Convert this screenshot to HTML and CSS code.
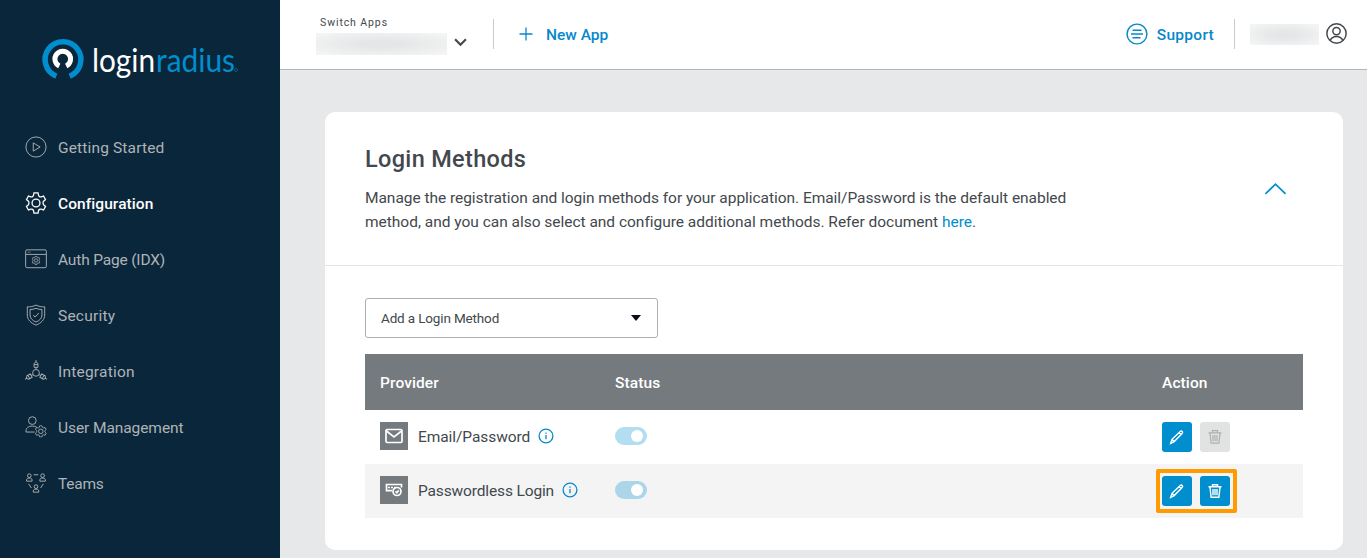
FILE: index.html
```html
<!DOCTYPE html>
<html lang="en">
<head>
<meta charset="utf-8">
<title>LoginRadius - Login Methods</title>
<link rel="stylesheet" href="styles.css">
</head>
<body>
<svg class="defs" width="0" height="0">
  <symbol id="gear" viewBox="0 0 24 24"><path d="M9.300 3.500 9.800 1h4.400l.5 2.500c.3 1.400 1.600 2.200 3 1.700l2.500-.8 2.200 3.800-1.900 1.700c-1.100 1-1.100 3.200 0 4.200l1.900 1.700-2.200 3.800-2.500-.8c-1.400-.5-2.700.3-3 1.700l-.5 2.500H9.800l-.5-2.500c-.3-1.400-1.600-2.200-3-1.700l-2.500.8-2.200-3.800 1.900-1.700c1.100-1 1.100-3.200 0-4.200L1.600 8.200l2.200-3.800 2.500.8c1.400.5 2.700-.3 3-1.700Z"/><circle cx="12" cy="12" r="4.300"/></symbol>
  <symbol id="pencil" viewBox="0 0 16 16"><path d="m1.700 14.300 1.300-4 8.200-7.800c.7-.7 1.400-.7 2 0s.6 1.300-.1 2L5.200 12.600ZM3.200 10.500l1.900 1.900M10.300 3.800l1.800 1.800"/></symbol>
  <symbol id="trash" viewBox="0 0 16 16"><path d="M1.500 3.800h13M5.500 3.600V1.700h5v1.900M3 4.300l1.100 9.900h7.800L13 4.300M6 6v6.200M8 6v6.200M10 6v6.200"/></symbol>
  <symbol id="info" viewBox="0 0 16 16"><circle cx="8" cy="8" r="6.900"/><path d="M8 7v4.200M8 4.500v1.200"/></symbol>
</svg>
<div class="app">
  <aside class="sidebar">
    <svg class="logo" viewBox="0 0 200 44" role="img" aria-label="loginradius">
      <path class="ring ring-outer" d="M15.300 37.200A17.900 17.900 0 1 1 28.700 37.200"/>
      <path class="ring ring-inner" d="M18.300 27A7.800 7.800 0 1 1 25.200 27"/>
      <text class="word login" x="51" y="33" textLength="63" lengthAdjust="spacingAndGlyphs">login</text>
      <text class="word radius" x="115" y="33" textLength="79" lengthAdjust="spacingAndGlyphs">radius</text>
      <circle class="reg" cx="195" cy="31" r="1.500"/>
    </svg>
    <nav class="menu">
      <a class="item started"><svg viewBox="0 0 24 24"><circle cx="12" cy="12" r="11"/><path d="M9 7.500v9l7.500-4.500Z"/></svg><span>Getting Started</span></a>
      <a class="item config active"><svg><use href="#gear"/></svg><span>Configuration</span></a>
      <a class="item auth"><svg viewBox="0 0 24 24"><rect x=".7" y="2" width="22.600" height="19.500" rx="1.500"/><path d="M1 7h22M3 4.500h1M5 4.500h1"/><use href="#gear" x="7" y="8.500" width="10" height="10" class="small-gear"/></svg><span>Auth Page (IDX)</span></a>
      <a class="item security"><svg viewBox="0 0 24 24"><path d="M12 1.200c3 1.500 6 2 9.500 1.900V12c0 5-4 9-9.500 11-5.500-2-9.500-6-9.500-11V3.100C6 3.200 9 2.700 12 1.200ZM12 4.700c2 .9 4 1.300 6.500 1.300v6c0 3.500-2.500 6-6.500 7.700C8 18 5.500 15.500 5.500 12V6C8 6 10 5.600 12 4.700ZM9 12l2 2.300 4-4.500"/></svg><span>Security</span></a>
      <a class="item integration"><svg viewBox="0 0 24 24"><circle cx="12" cy="14" r="3.700"/><path id="plug" d="M12 10V8M9.900 8V3.700L12 2l2.100 1.700V8ZM12 2V0M9.900 5h4.200"/><use href="#plug" transform="rotate(120 12 14)"/><use href="#plug" transform="rotate(240 12 14)"/></svg><span>Integration</span></a>
      <a class="item users"><svg viewBox="0 0 24 24"><circle cx="8" cy="5" r="4.200"/><path d="M10.500 17.500H1C1 13 3.500 11 8 11c2 0 3.500.4 4.700 1.200"/><use href="#gear" x="10.500" y="10" width="13.500" height="13.500" class="mid-gear"/></svg><span>User Management</span></a>
      <a class="item teams"><svg viewBox="0 0 24 24"><g id="person"><circle cx="4.700" cy="4" r="2"/><path d="M1.700 10V8.500C2 7 3 6.700 4.700 6.700S7.500 7 7.700 8.500V10Z"/></g><use href="#person" x="14.500"/><use href="#person" x="7.300" y="12"/><path d="M9.500 3h5M4 13l3 4.500M20 13l-3 4.500"/></svg><span>Teams</span></a>
    </nav>
  </aside>
  <div class="page">
    <header class="topbar">
      <div class="switcher">
        <div class="switch-field"><span class="switch-label">Switch Apps</span><span class="redacted app-name"></span></div>
        <svg class="chevron" viewBox="0 0 12 8"><path d="m1 1 5 5 5-5"/></svg>
      </div>
      <a class="new-app"><svg viewBox="0 0 14 14"><path d="M7 .5v13M.5 7h13"/></svg><span>New App</span></a>
      <a class="support"><svg viewBox="0 0 22 22"><circle cx="11" cy="11" r="9.900"/><path d="M6.500 7.300h9M5 11h12M6.500 14.700h8"/></svg><span>Support</span></a>
      <div class="account"><span class="redacted user-name"></span><svg viewBox="0 0 20 20"><circle cx="10" cy="10" r="9.200"/><circle cx="10" cy="7.700" r="3.500"/><path d="M4 16.700c1.200-3 3.200-3.900 6-3.900s4.800.9 6 3.900"/></svg></div>
    </header>
    <main class="content">
      <section class="card">
        <div class="card-head">
          <div>
            <h1>Login Methods</h1>
            <p><span class="line1">Manage the registration and login methods for your application. Email/Password is the default enabled</span><br><span class="line2">method, and you can also select and configure additional methods. Refer document <a>here</a>.</span></p>
          </div>
          <svg class="collapse" viewBox="0 0 24 14"><path d="M1.500 12 12 2l10.500 10"/></svg>
        </div>
        <div class="card-body">
          <div class="select"><span>Add a Login Method</span><i></i></div>
          <div class="table">
            <div class="row head"><span class="provider-h">Provider</span><span class="status-h">Status</span><span class="action-h">Action</span></div>
            <div class="row">
              <div class="provider"><b class="tile"><svg viewBox="0 0 18 16"><rect x="1" y="1.500" width="16" height="13" rx="1.200"/><path d="m1.500 3 7.500 6 7.500-6"/></svg></b><span class="email">Email/Password</span><svg class="info"><use href="#info"/></svg></div>
              <div><span class="toggle"></span></div>
              <div class="actions"><button><svg><use href="#pencil"/></svg></button><button class="disabled"><svg><use href="#trash"/></svg></button></div>
            </div>
            <div class="row alt">
              <div class="provider"><b class="tile"><svg viewBox="0 0 18 16"><path d="M7 8.700H1.500V2.500h15v3M3 5.500h2M6 5.500h2M9 5.500h1.500"/><circle cx="12" cy="9.500" r="4"/><path d="m10.500 9.200 1.300 1.500 2-2.300"/></svg></b><span class="passless">Passwordless Login</span><svg class="info"><use href="#info"/></svg></div>
              <div><span class="toggle"></span></div>
              <div class="actions marked"><button><svg><use href="#pencil"/></svg></button><button><svg><use href="#trash"/></svg></button></div>
            </div>
          </div>
        </div>
      </section>
    </main>
  </div>
</div>
</body>
</html>
```
FILE: styles.css
```css
* { box-sizing: border-box; }
body { margin: 0; font: 15.5px/24px Roboto, "Liberation Sans", sans-serif; color: #42484d; background: #e7e8ea; }
svg { display: block; flex: none; fill: none; stroke: currentColor; }
.defs { display: none; }
span { white-space: nowrap; }
.app { display: flex; height: 558px; overflow: hidden; }

.sidebar { width: 280px; flex: none; background: #0a263b; color: #aeb3b6; }
.logo { width: 200px; height: 44px; margin: 39px 0 0 41px; overflow: visible; }
.ring-outer { stroke: #008ecf; stroke-width: 5.500; }
.ring-inner { stroke: #fff; stroke-width: 5; }
.word { stroke: none; font: 32px Lato, "Open Sans", sans-serif; }
.login { fill: #fff; }
.radius { fill: #008ecf; }
.reg { stroke: #008ecf; stroke-width: .5; }
.menu { margin-top: 36px; }
.item { height: 56px; padding-left: 25px; display: flex; align-items: center; gap: 11px; }
.item svg { width: 22px; height: 22px; stroke-width: 1; }
.item span { padding-top: 1px; }
.started span { letter-spacing: .15px; }
.auth span { letter-spacing: -.17px; }
.security span, .integration span { letter-spacing: .22px; }
.users span { letter-spacing: -.08px; }
.teams span { letter-spacing: -.25px; }
.item.active { color: #fff; font-weight: 500; letter-spacing: .07px; }
.item.active svg { stroke-width: 1.400; }
.small-gear { stroke-width: 2; }
.mid-gear { stroke-width: 1.700; }

.page { flex: 1; }
.topbar { height: 70px; background: #fff; border-bottom: 1px solid #b3b5b8; display: flex; align-items: center; padding: 0 20px 1px 36px; color: #0688cc; font-weight: 500; }
.switcher { height: 30px; width: 178px; display: flex; align-items: center; border-right: 1px solid #c8cacc; color: #42484d; }
.switch-field { display: flex; flex-direction: column; gap: 4px; padding-top: 3px; }
.switch-label { font-size: 10.500px; line-height: 12px; font-weight: 400; letter-spacing: .9px; padding-left: 4px; }
.redacted { display: block; background: radial-gradient(ellipse, #e4e6e7 20%, #f3f4f4 90%); }
.app-name { width: 131px; height: 22px; }
.chevron { width: 13px; height: 9px; margin: 16px 0 0 7px; stroke-width: 2; }
.new-app { display: flex; align-items: center; margin-left: 25px; gap: 13px; }
.new-app span, .support span { padding-top: 2px; }
.new-app svg { width: 14px; height: 14px; stroke-width: 1.300; }
.support { display: flex; align-items: center; gap: 9px; margin-left: auto; height: 30px; padding-right: 20px; border-right: 1px solid #c8cacc; letter-spacing: .28px; }
.support svg { width: 22px; height: 22px; stroke-width: 1.400; }
.account { display: flex; align-items: center; gap: 7px; padding-left: 15px; color: #42484d; }
.user-name { width: 69px; height: 21px; }
.account svg { width: 21px; height: 21px; margin-bottom: 2px; stroke-width: 1.400; }

.content { padding: 42px 24px 8px 45px; }
.card { height: 438px; background: #fff; border-radius: 10px; }
.card-head { height: 154px; padding: 31px 56px 0 40px; display: flex; justify-content: space-between; border-bottom: 1px solid #e4e5e7; }
h1 { margin: 0 0 11px; font-size: 23.500px; line-height: 32px; font-weight: 500; letter-spacing: .33px; }
p { margin: 0; }
.line1 { letter-spacing: -.045px; }
.line2 { letter-spacing: -.018px; }
p a { color: #008ecf; }
.collapse { width: 23px; height: 14px; margin-top: 39px; color: #008ecf; stroke-width: 1.800; }
.card-body { padding: 32px 40px; }
.select { width: 293px; height: 40px; border: 1px solid #adafb3; border-radius: 3px; display: flex; align-items: center; justify-content: space-between; padding: 0 16px 0 15px; font-size: 13.500px; letter-spacing: -.15px; }
.select i { border: 5px solid transparent; border-top: 6px solid #0b1017; border-bottom: 0; }
.table { margin-top: 16px; }
.row { height: 54px; display: grid; grid-template-columns: 235px 547px 1fr; align-items: center; padding-left: 15px; }
.head { height: 56px; padding-top: 2px; background: #757a7e; color: #fff; font-weight: 500; letter-spacing: .1px; }
.alt { background: #f4f4f4; }
.provider { display: flex; align-items: center; }
.email { letter-spacing: -.07px; }
.passless { letter-spacing: -.14px; }
.tile { width: 28px; height: 28px; margin: 0 10px 2px 0; background: #757a7e; color: #fff; display: grid; place-items: center; }
.tile svg { width: 18px; height: 16px; stroke-width: 1.700; }
.info { width: 16px; height: 16px; margin: 0 0 2px 8px; color: #0688cc; stroke-width: 1.300; }
.toggle { display: block; width: 32px; height: 18px; margin-bottom: 2px; border-radius: 9px; background: #b3ddf1; padding: 3px 4px 3px 16px; }
.toggle::before { content: ""; display: block; width: 12px; height: 12px; border-radius: 50%; background: #fff; }
.alt .toggle { background: #abd5e9; }
.actions { display: flex; gap: 8px; }
.actions button { width: 30px; height: 30px; padding: 0; border: 0; border-radius: 3px; background: #008ecf; color: #fff; display: grid; place-items: center; }
.actions svg { width: 16px; height: 16px; margin-right: 1px; stroke-width: 1.400; }
.actions .disabled { background: #e1e2e2; color: #adafb3; }
.actions .disabled svg { stroke-width: 1.200; }
.marked { width: 81px; margin-left: -6px; padding: 3px 2px; border: 4px solid #ff9a00; border-radius: 2px; }
```
